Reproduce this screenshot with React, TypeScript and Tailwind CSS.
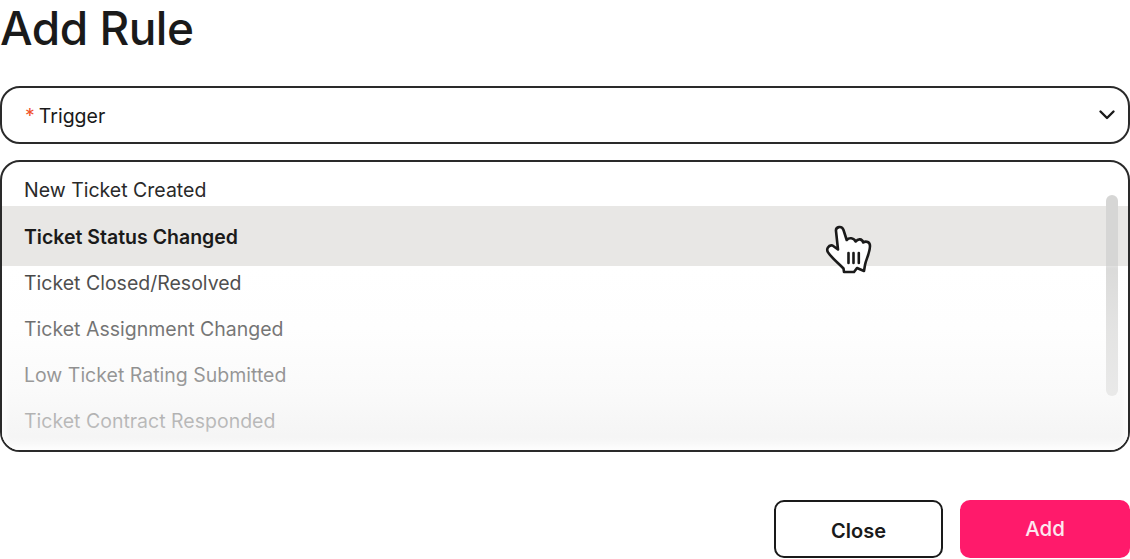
const triggers = [
  { label: 'New Ticket Created', className: 'h-[47px] pt-[3px] text-[#2a2a2a]' },
  {
    label: 'Ticket Status Changed',
    className: 'h-[60px] -my-[7px] pt-[3px] relative bg-[#e8e7e5] font-semibold text-[#1a1a1a]',
  },
  { label: 'Ticket Closed/Resolved', className: 'h-[46px] pt-[3px] text-[#2a2a2a]' },
  { label: 'Ticket Assignment Changed', className: 'h-[46px] pt-[3px] text-[#2a2a2a]' },
  { label: 'Low Ticket Rating Submitted', className: 'h-[46px] pt-[3px] text-[#2a2a2a]' },
  { label: 'Ticket Contract Responded', className: 'h-[46px] pt-[3px] text-[#2a2a2a]' },
];

function HandCursor() {
  return (
    <svg
      viewBox="0 0 60 60"
      className="absolute left-[820px] top-[220px] h-[60px] w-[60px]"
      fill="none"
      stroke="#1a1a1a"
      strokeWidth="2.6"
      strokeLinejoin="round"
      strokeLinecap="round"
    >
      <path
        fill="#ffffff"
        d="M16 11C15.5 6.5 22 5.5 23.5 10L26.7 20C29 17.5 33.5 17.5 35.7 21.5C38 18.5 42 18.5 43.3 22.5C46 20.5 50 22 50 26C50 33 46 39 45 45L44 51L37 48L34 52L24 52L23.5 48.5C18 43 12 38 8.5 33C5.5 29.5 8.5 24.5 12.5 25.5L18 29.5Z"
      />
      <path d="M28.5 33V43M33.5 33V43M38.8 33V43" />
    </svg>
  );
}

export default function App() {
  return (
    <div className="h-[559px] w-[1130px] overflow-hidden bg-white font-['Inter',sans-serif] text-[#1a1a1a]">
      <h1 className="h-[70px] text-[46px] font-medium leading-[56px] tracking-[-0.5px]">Add Rule</h1>

      <div className="mt-4 flex h-[58px] items-center justify-between rounded-[20px] border-2 border-[#2a2a2a] pl-[23px] pr-[9px] text-[19.5px]">
        <span className="pt-[3px]">
          <span className="mr-[4px] text-[#f0532d]">*</span>
          Trigger
        </span>
        <svg viewBox="0 0 24 24" className="h-6 w-6" fill="none" stroke="#1a1a1a" strokeWidth="2.4" strokeLinecap="round" strokeLinejoin="round">
          <path d="M5.5 8.5L12 15L18.5 8.5" />
        </svg>
      </div>

      <div className="relative mt-4 h-[292px] overflow-hidden rounded-[20px] border-2 border-[#2a2a2a]">
        <ul className="pt-[4px] text-[19.5px]">
          {triggers.map((item) => (
            <li key={item.label} className={`flex items-center pl-[22px] ${item.className}`}>
              {item.label}
            </li>
          ))}
        </ul>
        <div className="absolute right-[10px] top-[33px] h-[201px] w-[12px] rounded-full bg-[#d6d6d5]" />
        <div className="absolute inset-x-0 bottom-0 h-[184px] bg-[linear-gradient(to_bottom,rgba(255,255,255,0.1),rgba(252,252,252,0.36)_35%,rgba(247,247,247,0.56)_65%,rgba(241,241,241,0.82)_100%)] shadow-[inset_0_-6px_10px_rgba(255,255,255,0.9),inset_8px_0_10px_-6px_rgba(255,255,255,0.8),inset_-8px_0_10px_-6px_rgba(255,255,255,0.8)]" />
      </div>

      <div className="mt-12 flex justify-end gap-[17px]">
        <button className="h-[58px] w-[169px] rounded-[10px] border-2 border-[#1a1a1a] pt-[4px] text-[20px] font-semibold text-[#1a1a1a]">
          Close
        </button>
        <button className="h-[58px] w-[170px] rounded-[10px] bg-[#ff1a6b] pt-[1px] text-[20.5px] font-medium text-[#fde8ef]">
          Add
        </button>
      </div>

      <HandCursor />
    </div>
  );
}
